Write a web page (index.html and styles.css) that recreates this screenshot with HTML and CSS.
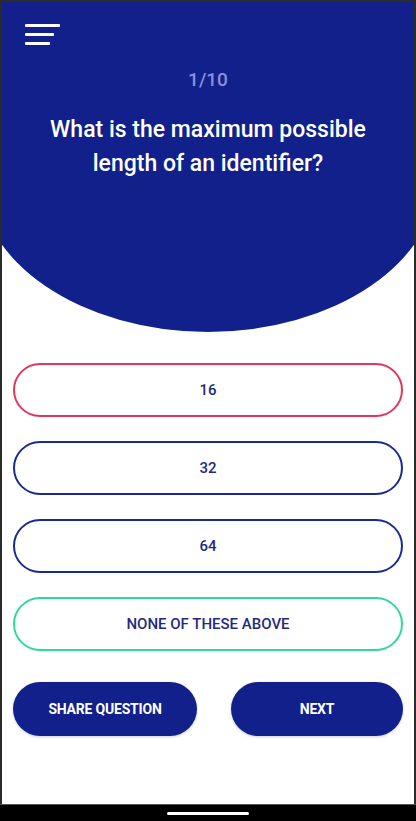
FILE: index.html
```html
<!DOCTYPE html>
<html lang="en">
<head>
  <meta charset="UTF-8">
  <title>Quiz</title>
  <link rel="stylesheet" href="styles.css">
</head>
<body>

  <div class="screen">
    <header class="top">
      <div class="top-bg"></div>
      <div class="top-content">
        <button class="menu" aria-label="Menu">
          <svg width="36" height="22" viewBox="0 0 36 22">
            <rect x="0" y="0" width="35" height="3" rx="1" fill="#fff"/>
            <rect x="0" y="9" width="29" height="3" rx="1" fill="#fff"/>
            <rect x="0" y="18" width="25" height="3" rx="1" fill="#fff"/>
          </svg>
        </button>
        <p class="counter">1/10</p>
        <h1 class="question">What is the maximum possible length of an identifier?</h1>
      </div>
    </header>

    <section class="options">
      <button class="option wrong">16</button>
      <button class="option">32</button>
      <button class="option">64</button>
      <button class="option right">NONE OF THESE ABOVE</button>
    </section>

    <div class="actions">
      <button class="action share">SHARE QUESTION</button>
      <button class="action next">NEXT</button>
    </div>
  </div>

  <div class="navbar"><span class="home-bar"></span></div>

</body>
</html>
```

FILE: styles.css
```css
body {
  margin: 0;
  background: #2b2b2b;
  font-family: Roboto, "Noto Sans", Arial, sans-serif;
  width: 416px;
  height: 821px;
  overflow: hidden;
}
.screen {
  margin: 2px 2px 0;
  height: 802px;
  background: #fff;
  overflow: hidden;
}
.top {
  position: relative;
  height: 330px;
}
.top-bg {
  position: absolute;
  left: -24px;
  top: -2px;
  width: 460px;
  height: 332px;
  background: #11208a;
  border-radius: 0 0 230px 230px / 0 0 157px 157px;
}
.top-content {
  position: relative;
  padding: 22px 0 0;
}
.menu {
  display: block;
  margin-left: 23px;
  padding: 0;
  border: 0;
  background: none;
  height: 22px;
}
.menu svg {
  display: block;
}
.counter {
  margin: 23px 0 0;
  text-align: center;
  color: #8b8fdc;
  font-size: 19px;
  font-weight: 500;
  line-height: 22px;
}
.question {
  margin: 22px auto 0;
  width: 360px;
  text-align: center;
  color: #fff;
  font-size: 23px;
  font-weight: 500;
  line-height: 34px;
}
.options {
  display: flex;
  flex-direction: column;
  gap: 24px;
  padding: 31px 11px 0;
}
.option {
  height: 54px;
  border: 2px solid #1b2a8e;
  border-radius: 27px;
  background: #fff;
  color: #1f2a80;
  font-family: inherit;
  font-size: 15px;
  font-weight: 500;
}
.option.wrong {
  border-color: #e1365c;
}
.option.right {
  border-color: #2fd99b;
}
.actions {
  display: flex;
  justify-content: space-between;
  padding: 31px 11px 0;
}
.action {
  height: 54px;
  border: 0;
  border-radius: 27px;
  background: #11208a;
  color: #fff;
  font-family: inherit;
  font-size: 14px;
  font-weight: 700;
  letter-spacing: -0.2px;
  box-shadow: 0 1px 3px rgba(0,0,0,0.2);
}
.share {
  width: 184px;
}
.next {
  width: 172px;
}
.navbar {
  height: 17px;
  background: #000;
  border-top: 1px solid #555;
  display: flex;
  justify-content: center;
  align-items: center;
}
.home-bar {
  width: 82px;
  height: 3px;
  border-radius: 2px;
  background: #fff;
}
```
